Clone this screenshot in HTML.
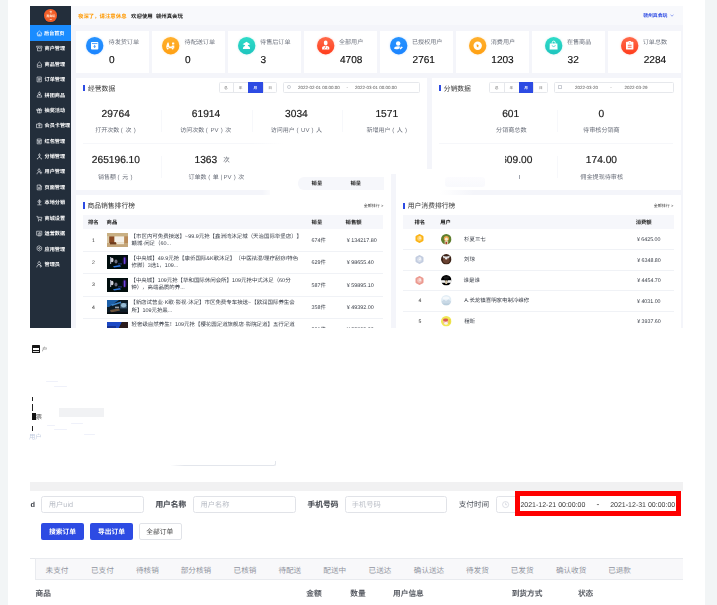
<!DOCTYPE html>
<html lang="zh-CN"><head><meta charset="utf-8"><title>订单管理</title>
<style>
html,body{margin:0;padding:0;}
body{width:717px;height:605px;overflow:hidden;background:#fff;position:relative;font-family:"Liberation Sans","Noto Sans CJK SC",sans-serif;text-rendering:geometricPrecision;}
.a{position:absolute;box-sizing:border-box;}
.t{white-space:pre;text-spacing-trim:space-all;}
i{font-style:normal}.p1{margin:0 2.7px 0 1.6px}.p2{margin-left:2.2px}.p3{margin-left:2.4px}.p4{margin:0 1.6px}
#dash{position:absolute;left:0;top:0;width:717px;height:327.9px;overflow:hidden;filter:blur(0.3px);}
#form{position:absolute;left:0;top:0;width:717px;height:605px;filter:blur(0.25px);}
svg{overflow:visible}
</style></head><body>

<div class="a" style="left:0.00px;top:0.00px;width:8.00px;height:605.00px;background:#f2f5f6;"></div>
<div class="a" style="left:705.00px;top:0.00px;width:12.00px;height:605.00px;background:#f2f5f6;"></div>
<div id="dash">
<div class="a" style="left:30.00px;top:6.30px;width:653.00px;height:321.60px;background:#f4f5fa;"></div>
<div class="a" style="left:71.00px;top:6.30px;width:612.00px;height:18.70px;background:#f8f9fc;"></div>
<div class="a" style="left:30.00px;top:6.30px;width:41.10px;height:321.60px;background:#232e3b;"></div>
<div class="a" style="left:44.3px;top:9.4px;width:12.7px;height:12.7px;border-radius:50%;background:radial-gradient(circle at 45% 45%,#f4672f,#ee5320);box-shadow:0 0 0 0.9px #152b44;"></div>
<span id="t1" class="a t" style="top:10.78px;font-size:2.6px;line-height:3.64px;color:#ffe9d8;font-weight:bold;left:-49.30px;width:200px;text-align:center;">✿</span>
<span id="t2" class="a t" style="top:14.30px;font-size:3.0px;line-height:4.2px;color:#ffe9d8;font-weight:bold;left:-49.30px;width:200px;text-align:center;">真会玩</span>
<span id="t3" class="a t" style="top:18.60px;font-size:2.0px;line-height:2.8px;color:#ffe9d8;font-weight:bold;left:-49.30px;width:200px;text-align:center;">▬</span>
<div class="a" style="left:30.00px;top:24.70px;width:41.10px;height:16.20px;background:#1a8cff;"></div>
<svg class="a" style="left:35.9px;top:29.70px" width="6.8" height="6.8" viewBox="0 0 12 12"><path d="M1.5 6.2 L6 1.8 L10.5 6.2 M2.6 5.4 V10.3 H9.4 V5.4 M5 10.3 V7.6 H7 V10.3" fill="none" stroke="#f3f5f8" stroke-width="1.05" stroke-linejoin="round" stroke-linecap="round"/></svg>
<span id="t4" class="a t" style="top:31.46px;font-size:5.1px;line-height:7.14px;color:#fff;font-weight:bold;left:44.09px;">后台首页</span>
<svg class="a" style="left:35.9px;top:45.10px" width="6.8" height="6.8" viewBox="0 0 12 12"><path d="M1.6 2.2 H10.4 V4.4 a1.45 1.45 0 0 1 -2.9 0 a1.45 1.45 0 0 1 -2.9 0 a1.45 1.45 0 0 1 -3 0 Z M2.6 6.4 V10.3 H9.4 V6.4" fill="none" stroke="#f3f5f8" stroke-width="1.05" stroke-linejoin="round" stroke-linecap="round"/></svg>
<span id="t5" class="a t" style="top:46.27px;font-size:5.1px;line-height:7.14px;color:#fff;font-weight:bold;left:44.60px;">商户管理</span>
<svg class="a" style="left:35.9px;top:60.50px" width="6.8" height="6.8" viewBox="0 0 12 12"><path d="M2.4 10.3 V5.2 L6 1.8 L9.6 5.2 V10.3 Z M4.6 7.8 H7.4" fill="none" stroke="#f3f5f8" stroke-width="1.05" stroke-linejoin="round" stroke-linecap="round"/></svg>
<span id="t6" class="a t" style="top:61.97px;font-size:5.1px;line-height:7.14px;color:#fff;font-weight:bold;left:44.60px;">商品管理</span>
<svg class="a" style="left:35.9px;top:75.90px" width="6.8" height="6.8" viewBox="0 0 12 12"><path d="M2.6 1.8 H9.4 V10.3 H2.6 Z M4.4 4.2 H7.6 M4.4 6.2 H7.6 M4.4 8.2 H6.2" fill="none" stroke="#f3f5f8" stroke-width="1.05" stroke-linejoin="round" stroke-linecap="round"/></svg>
<span id="t7" class="a t" style="top:76.78px;font-size:5.1px;line-height:7.14px;color:#fff;font-weight:bold;left:44.60px;">订单管理</span>
<svg class="a" style="left:35.9px;top:91.30px" width="6.8" height="6.8" viewBox="0 0 12 12"><path d="M6 2 a2 2 0 1 0 0.01 0 M1.8 10.2 a4.2 4.2 0 0 1 8.4 0 Z M6 6 V8" fill="none" stroke="#f3f5f8" stroke-width="1.05" stroke-linejoin="round" stroke-linecap="round"/></svg>
<span id="t8" class="a t" style="top:92.96px;font-size:5.1px;line-height:7.14px;color:#fff;font-weight:bold;left:44.60px;">拼团商品</span>
<svg class="a" style="left:35.9px;top:106.70px" width="6.8" height="6.8" viewBox="0 0 12 12"><path d="M1.8 4.2 H10.2 V6 H1.8 Z M2.8 6 V10.3 H9.2 V6 M6 4.2 V10.3 M6 4.2 C4 1, 2.6 3, 6 4.2 C8 1, 9.4 3, 6 4.2" fill="none" stroke="#f3f5f8" stroke-width="1.05" stroke-linejoin="round" stroke-linecap="round"/></svg>
<span id="t9" class="a t" style="top:108.33px;font-size:5.1px;line-height:7.14px;color:#fff;font-weight:bold;left:44.60px;">抽奖活动</span>
<svg class="a" style="left:35.9px;top:122.10px" width="6.8" height="6.8" viewBox="0 0 12 12"><path d="M1.6 3.6 H10.4 V10 H1.6 Z M4 3.6 L5 2 H7 L8 3.6 M6 5.6 a1.3 1.3 0 1 0 0.01 0" fill="none" stroke="#f3f5f8" stroke-width="1.05" stroke-linejoin="round" stroke-linecap="round"/></svg>
<span id="t10" class="a t" style="top:123.18px;font-size:5.1px;line-height:7.14px;color:#fff;font-weight:bold;left:44.60px;">会员卡管理</span>
<svg class="a" style="left:35.9px;top:137.50px" width="6.8" height="6.8" viewBox="0 0 12 12"><path d="M2.8 1.8 H9.2 V10.3 H2.8 Z M2.8 4.6 H9.2 M5 6.2 H7 V8.2 H5 Z" fill="none" stroke="#f3f5f8" stroke-width="1.05" stroke-linejoin="round" stroke-linecap="round"/></svg>
<span id="t11" class="a t" style="top:139.08px;font-size:5.1px;line-height:7.14px;color:#fff;font-weight:bold;left:44.60px;">红包管理</span>
<svg class="a" style="left:35.9px;top:152.90px" width="6.8" height="6.8" viewBox="0 0 12 12"><path d="M6 1.8 a1.7 1.7 0 1 0 0.01 0 M6 5.2 V7 M6 7 L2.6 10 M6 7 L9.4 10 M2.2 10.2 h0.8 M9 10.2 h0.8" fill="none" stroke="#f3f5f8" stroke-width="1.05" stroke-linejoin="round" stroke-linecap="round"/></svg>
<span id="t12" class="a t" style="top:153.85px;font-size:5.1px;line-height:7.14px;color:#fff;font-weight:bold;left:44.60px;">分销管理</span>
<svg class="a" style="left:35.9px;top:168.30px" width="6.8" height="6.8" viewBox="0 0 12 12"><path d="M5.4 1.8 a2.1 2.1 0 1 0 0.01 0 M1.8 10.3 a3.7 3.7 0 0 1 5.2 -3.6 M8.6 6.6 V10.3 M7 8.4 H10.2" fill="none" stroke="#f3f5f8" stroke-width="1.05" stroke-linejoin="round" stroke-linecap="round"/></svg>
<span id="t13" class="a t" style="top:169.07px;font-size:5.1px;line-height:7.14px;color:#fff;font-weight:bold;left:44.60px;">用户管理</span>
<svg class="a" style="left:35.9px;top:183.70px" width="6.8" height="6.8" viewBox="0 0 12 12"><path d="M2.8 1.8 H7.4 L9.4 3.8 V10.3 H2.8 Z M7.2 1.8 V4 H9.4 M4.4 6 H7.6 M4.4 8 H7.6" fill="none" stroke="#f3f5f8" stroke-width="1.05" stroke-linejoin="round" stroke-linecap="round"/></svg>
<span id="t14" class="a t" style="top:185.11px;font-size:5.1px;line-height:7.14px;color:#fff;font-weight:bold;left:44.60px;">页面管理</span>
<svg class="a" style="left:35.9px;top:199.10px" width="6.8" height="6.8" viewBox="0 0 12 12"><path d="M6 1.8 a2.6 2.6 0 1 0 0.01 0 M6 7 V9.2 M3 10.3 H9 M6 3.6 a0.8 0.8 0 1 0 0.01 0" fill="none" stroke="#f3f5f8" stroke-width="1.05" stroke-linejoin="round" stroke-linecap="round"/></svg>
<span id="t15" class="a t" style="top:200.31px;font-size:5.1px;line-height:7.14px;color:#fff;font-weight:bold;left:44.60px;">本地分销</span>
<svg class="a" style="left:35.9px;top:214.50px" width="6.8" height="6.8" viewBox="0 0 12 12"><path d="M1.4 2.4 H3 L4.2 7.8 H9.6 L10.4 4 H3.6 M4.8 9.8 a0.5 0.5 0 1 0 0.01 0 M8.8 9.8 a0.5 0.5 0 1 0 0.01 0" fill="none" stroke="#f3f5f8" stroke-width="1.05" stroke-linejoin="round" stroke-linecap="round"/></svg>
<span id="t16" class="a t" style="top:216.23px;font-size:5.1px;line-height:7.14px;color:#fff;font-weight:bold;left:44.60px;">商城设置</span>
<svg class="a" style="left:35.9px;top:229.90px" width="6.8" height="6.8" viewBox="0 0 12 12"><path d="M1.8 2.2 H10.2 V9.2 H1.8 Z M4 10.4 H8 M4.2 7.4 V5.6 M6 7.4 V4.2 M7.8 7.4 V5" fill="none" stroke="#f3f5f8" stroke-width="1.05" stroke-linejoin="round" stroke-linecap="round"/></svg>
<span id="t17" class="a t" style="top:230.78px;font-size:5.1px;line-height:7.14px;color:#fff;font-weight:bold;left:44.60px;">运营数据</span>
<svg class="a" style="left:35.9px;top:245.30px" width="6.8" height="6.8" viewBox="0 0 12 12"><path d="M6 1.6 L10 3.9 V8.3 L6 10.6 L2 8.3 V3.9 Z M6 4.6 a1.5 1.5 0 1 0 0.01 0" fill="none" stroke="#f3f5f8" stroke-width="1.05" stroke-linejoin="round" stroke-linecap="round"/></svg>
<span id="t18" class="a t" style="top:246.73px;font-size:5.1px;line-height:7.14px;color:#fff;font-weight:bold;left:44.60px;">应用管理</span>
<svg class="a" style="left:35.9px;top:260.70px" width="6.8" height="6.8" viewBox="0 0 12 12"><path d="M5.6 1.4 a2.5 2.5 0 1 0 0.01 0 M1.4 10.6 a4.2 4.2 0 0 1 6.6 -3.4 M8.4 8 a1.3 1.3 0 1 0 0.01 0" fill="none" stroke="#f3f5f8" stroke-width="1.05" stroke-linejoin="round" stroke-linecap="round"/></svg>
<span id="t19" class="a t" style="top:262.43px;font-size:5.1px;line-height:7.14px;color:#fff;font-weight:bold;left:44.60px;">管理员</span>
<span id="t20" class="a t" style="top:13.98px;font-size:5.4px;line-height:7.56px;color:#ff9900;font-weight:bold;left:78.00px;">夜深了，请注意休息</span>
<span id="t21" class="a t" style="top:13.98px;font-size:5.4px;line-height:7.56px;color:#222;font-weight:bold;left:131.10px;">欢迎使用</span>
<span id="t22" class="a t" style="top:13.98px;font-size:5.4px;line-height:7.56px;color:#222;font-weight:bold;left:155.89px;">赣州真会玩</span>
<span id="t23" class="a t" style="top:14.09px;font-size:4.85px;line-height:6.79px;color:#2d4be3;font-weight:bold;left:643.17px;">赣州真会玩</span>
<svg class="a" style="left:669.6px;top:13.6px" width="4" height="3" viewBox="0 0 4 3"><path d="M0.5 0.8 L2 2.2 L3.5 0.8" fill="none" stroke="#2d4be3" stroke-width="0.5"/></svg>
<div class="a" style="left:76.20px;top:30.90px;width:72.70px;height:41.80px;background:#fff;"></div>
<svg class="a" style="left:86.00px;top:37.2px;filter:drop-shadow(0 0.8px 1px #1b84ff40)" width="17.4" height="17.4" viewBox="0 0 17.4 17.4"><defs><linearGradient id="g0" x1="0" y1="0" x2="0" y2="1"><stop offset="0" stop-color="#2693ff"/><stop offset="1" stop-color="#1b84ff"/></linearGradient></defs><circle cx="8.7" cy="8.7" r="8.7" fill="url(#g0)"/><rect x="5" y="5" width="7.3" height="7.6" rx="0.8" fill="#fff"/><rect x="5.9" y="6.2" width="5.5" height="0.7" fill="#1b84ff"/><path d="M8.65 7.9 V10.4 M7.7 9.4 L8.65 10.5 L9.6 9.4" stroke="#1b84ff" stroke-width="0.8" fill="none"/></svg>
<span id="t24" class="a t" style="top:39.45px;font-size:6.1px;line-height:8.54px;color:#737883;left:108.60px;">待发货订单</span>
<span id="t25" class="a t" style="top:54.31px;font-size:10.1px;line-height:14.14px;color:#111;left:108.90px;-webkit-text-stroke:0.15px #111;">0</span>
<div class="a" style="left:152.20px;top:30.90px;width:72.70px;height:41.80px;background:#fff;"></div>
<svg class="a" style="left:162.00px;top:37.2px;filter:drop-shadow(0 0.8px 1px #ffa01240)" width="17.4" height="17.4" viewBox="0 0 17.4 17.4"><defs><linearGradient id="g1" x1="0" y1="0" x2="0" y2="1"><stop offset="0" stop-color="#ffb02e"/><stop offset="1" stop-color="#ffa012"/></linearGradient></defs><circle cx="8.7" cy="8.7" r="8.7" fill="url(#g1)"/><path d="M5.6 5.4 L6.6 5.4 L7.4 9.6 L9.6 9.6 L10 8.4 L12.3 8.4 L12.3 11.2 L11.8 11.2 A1.3 1.3 0 0 0 9.4 11.2 L7 11.2 A1.3 1.3 0 0 0 4.4 11.2 L4 11.2 L4.6 8 Z" fill="#fff"/><circle cx="5.7" cy="11.4" r="1.0" fill="#fff"/><circle cx="10.6" cy="11.4" r="1.0" fill="#fff"/><rect x="10" y="5.6" width="2.3" height="1.8" rx="0.3" fill="#fff"/></svg>
<span id="t26" class="a t" style="top:39.45px;font-size:6.1px;line-height:8.54px;color:#737883;left:184.60px;">待配送订单</span>
<span id="t27" class="a t" style="top:54.31px;font-size:10.1px;line-height:14.14px;color:#111;left:184.90px;-webkit-text-stroke:0.15px #111;">0</span>
<div class="a" style="left:228.20px;top:30.90px;width:72.70px;height:41.80px;background:#fff;"></div>
<svg class="a" style="left:238.00px;top:37.2px;filter:drop-shadow(0 0.8px 1px #1ec4be40)" width="17.4" height="17.4" viewBox="0 0 17.4 17.4"><defs><linearGradient id="g2" x1="0" y1="0" x2="0" y2="1"><stop offset="0" stop-color="#2fdcc8"/><stop offset="1" stop-color="#1ec4be"/></linearGradient></defs><circle cx="8.7" cy="8.7" r="8.7" fill="url(#g2)"/><path d="M4.6 7.2 L8.5 4.7 L12.3 7.2 L10.2 7.9 A1.9 1.9 0 0 1 6.7 7.9 Z" fill="#fff"/><circle cx="8.5" cy="7.6" r="1.7" fill="#fff"/><path d="M4.9 12 A3.6 3.2 0 0 1 12.1 12 Z" fill="#fff"/></svg>
<span id="t28" class="a t" style="top:39.45px;font-size:6.1px;line-height:8.54px;color:#737883;left:260.09px;">待售后订单</span>
<span id="t29" class="a t" style="top:54.31px;font-size:10.1px;line-height:14.14px;color:#111;left:260.42px;-webkit-text-stroke:0.15px #111;">3</span>
<div class="a" style="left:304.20px;top:30.90px;width:72.70px;height:41.80px;background:#fff;"></div>
<svg class="a" style="left:317.05px;top:37.2px;filter:drop-shadow(0 0.8px 1px #ff3d1c40)" width="17.4" height="17.4" viewBox="0 0 17.4 17.4"><defs><linearGradient id="g3" x1="0" y1="0" x2="0" y2="1"><stop offset="0" stop-color="#ff6a4a"/><stop offset="1" stop-color="#ff3d1c"/></linearGradient></defs><circle cx="8.7" cy="8.7" r="8.7" fill="url(#g3)"/><ellipse cx="8.7" cy="5.9" rx="1.9" ry="2.3" fill="#fff"/><path d="M5.1 12.6 V10.6 Q5.1 9.4 6.6 9.2 L8.7 8.6 L10.8 9.2 Q12.3 9.4 12.3 10.6 V12.6 Z" fill="#fff"/><rect x="8.45" y="8.4" width="0.5" height="2.6" fill="#ff3d1c"/><rect x="7" y="10.6" width="0.5" height="1.2" fill="#ff3d1c"/><rect x="10" y="10.6" width="0.5" height="1.2" fill="#ff3d1c"/></svg>
<span id="t30" class="a t" style="top:39.45px;font-size:6.1px;line-height:8.54px;color:#737883;left:338.93px;">全部用户</span>
<span id="t31" class="a t" style="top:54.31px;font-size:10.1px;line-height:14.14px;color:#111;left:339.95px;-webkit-text-stroke:0.15px #111;">4708</span>
<div class="a" style="left:380.20px;top:30.90px;width:72.70px;height:41.80px;background:#fff;"></div>
<svg class="a" style="left:390.00px;top:37.2px;filter:drop-shadow(0 0.8px 1px #1b84ff40)" width="17.4" height="17.4" viewBox="0 0 17.4 17.4"><defs><linearGradient id="g4" x1="0" y1="0" x2="0" y2="1"><stop offset="0" stop-color="#2693ff"/><stop offset="1" stop-color="#1b84ff"/></linearGradient></defs><circle cx="8.7" cy="8.7" r="8.7" fill="url(#g4)"/><circle cx="8.2" cy="6.5" r="2.2" fill="#fff"/><path d="M4 11.6 Q4.4 9.2 8.2 9.2 Q9.6 9.2 10.4 9.7 L8.6 12 Q5 12.6 4 11.6 Z" fill="#fff"/><path d="M9.4 11.6 L11.6 9.4 L12.9 10.2 L10.6 12.6 Z" fill="#fff"/></svg>
<span id="t32" class="a t" style="top:39.45px;font-size:6.1px;line-height:8.54px;color:#737883;left:411.98px;">已授权用户</span>
<span id="t33" class="a t" style="top:54.31px;font-size:10.1px;line-height:14.14px;color:#111;left:412.52px;-webkit-text-stroke:0.15px #111;">2761</span>
<div class="a" style="left:456.20px;top:30.90px;width:72.70px;height:41.80px;background:#fff;"></div>
<svg class="a" style="left:469.05px;top:37.2px;filter:drop-shadow(0 0.8px 1px #ffa01240)" width="17.4" height="17.4" viewBox="0 0 17.4 17.4"><defs><linearGradient id="g5" x1="0" y1="0" x2="0" y2="1"><stop offset="0" stop-color="#ffb02e"/><stop offset="1" stop-color="#ffa012"/></linearGradient></defs><circle cx="8.7" cy="8.7" r="8.7" fill="url(#g5)"/><circle cx="8.7" cy="8.7" r="4.2" fill="#fff"/><path d="M7.6 7.2 L9.6 8 L9.2 10.4 L7.8 9.4 Z" fill="#ffa012"/></svg>
<span id="t34" class="a t" style="top:39.45px;font-size:6.1px;line-height:8.54px;color:#737883;left:490.77px;">消费用户</span>
<span id="t35" class="a t" style="top:54.31px;font-size:10.1px;line-height:14.14px;color:#111;left:491.27px;-webkit-text-stroke:0.15px #111;">1203</span>
<div class="a" style="left:532.20px;top:30.90px;width:72.70px;height:41.80px;background:#fff;"></div>
<svg class="a" style="left:545.05px;top:37.2px;filter:drop-shadow(0 0.8px 1px #1ec4be40)" width="17.4" height="17.4" viewBox="0 0 17.4 17.4"><defs><linearGradient id="g6" x1="0" y1="0" x2="0" y2="1"><stop offset="0" stop-color="#2fdcc8"/><stop offset="1" stop-color="#1ec4be"/></linearGradient></defs><circle cx="8.7" cy="8.7" r="8.7" fill="url(#g6)"/><path d="M4.8 6.4 H12.4 L12.6 12.6 H4.6 Z" fill="#fff"/><path d="M7.2 6.8 V5.6 A1.5 1.5 0 0 1 10.2 5.6 V6.8" stroke="#fff" stroke-width="0.9" fill="none"/><path d="M6.8 8.6 Q8.7 10.6 10.6 8.6" stroke="#1ec4be" stroke-width="0.7" fill="none"/></svg>
<span id="t36" class="a t" style="top:39.45px;font-size:6.1px;line-height:8.54px;color:#737883;left:566.90px;">在售商品</span>
<span id="t37" class="a t" style="top:54.31px;font-size:10.1px;line-height:14.14px;color:#111;left:567.52px;-webkit-text-stroke:0.15px #111;">32</span>
<div class="a" style="left:608.20px;top:30.90px;width:72.70px;height:41.80px;background:#fff;"></div>
<svg class="a" style="left:621.05px;top:37.2px;filter:drop-shadow(0 0.8px 1px #ff3d1c40)" width="17.4" height="17.4" viewBox="0 0 17.4 17.4"><defs><linearGradient id="g7" x1="0" y1="0" x2="0" y2="1"><stop offset="0" stop-color="#ff6a4a"/><stop offset="1" stop-color="#ff3d1c"/></linearGradient></defs><circle cx="8.7" cy="8.7" r="8.7" fill="url(#g7)"/><rect x="5" y="4.8" width="7.4" height="7.8" rx="0.7" fill="#fff"/><rect x="7.4" y="4.1" width="2.6" height="1.5" rx="0.4" fill="#fff"/><rect x="6.8" y="7.8" width="3.8" height="0.8" fill="#ff3d1c"/><rect x="6.8" y="9.8" width="3.8" height="0.8" fill="#ff3d1c"/><rect x="8.2" y="5.6" width="1" height="0.6" fill="#ff3d1c"/></svg>
<span id="t38" class="a t" style="top:39.45px;font-size:6.1px;line-height:8.54px;color:#737883;left:642.72px;">订单总数</span>
<span id="t39" class="a t" style="top:54.31px;font-size:10.1px;line-height:14.14px;color:#111;left:643.66px;-webkit-text-stroke:0.15px #111;">2284</span>
<div class="a" style="left:76.20px;top:78.10px;width:350.80px;height:111.80px;background:#fff;"></div>
<div class="a" style="left:83.00px;top:85.00px;width:1.50px;height:6.20px;background:#2d4be3;"></div>
<span id="t40" class="a t" style="top:85.05px;font-size:6.8px;line-height:9.52px;color:#333;left:88.00px;">经营数据</span>
<div class="a" style="left:218.50px;top:81.80px;width:58.88px;height:10.8px;border:1px solid #e6e8ec;border-radius:1.5px;background:#fff;"></div>
<span id="t41" class="a t" style="top:86.01px;font-size:3.7px;line-height:5.18px;color:#666;left:125.86px;width:200px;text-align:center;">总</span>
<div class="a" style="left:233.22px;top:81.80px;width:0.60px;height:10.80px;background:#e6e8ec;"></div>
<span id="t42" class="a t" style="top:86.01px;font-size:3.7px;line-height:5.18px;color:#666;left:140.58px;width:200px;text-align:center;">年</span>
<div class="a" style="left:247.94px;top:81.80px;width:14.72px;height:10.80px;background:#2d4be3;"></div>
<span id="t43" class="a t" style="top:85.53px;font-size:3.7px;line-height:5.18px;color:#fff;font-weight:bold;left:155.30px;width:200px;text-align:center;">月</span>
<div class="a" style="left:262.66px;top:81.80px;width:0.60px;height:10.80px;background:#e6e8ec;"></div>
<span id="t44" class="a t" style="top:86.01px;font-size:3.7px;line-height:5.18px;color:#666;left:170.02px;width:200px;text-align:center;">日</span>
<div class="a" style="left:283.00px;top:81.80px;width:136.70px;height:10.8px;border:1px solid #e6e8ec;border-radius:1.5px;background:#fff;"></div>
<div class="a" style="left:287.00px;top:85.30px;width:3.8px;height:3.8px;border:0.6px solid #c9ccd3;border-radius:50%;"></div>
<span id="t45" class="a t" style="top:84.89px;font-size:4.5px;line-height:6.3px;color:#555;left:298.00px;">2022-02-01 00:00:00</span>
<span id="t46" class="a t" style="top:85.35px;font-size:4.5px;line-height:6.3px;color:#555;left:247.30px;width:200px;text-align:center;">-</span>
<span id="t47" class="a t" style="top:84.89px;font-size:4.5px;line-height:6.3px;color:#555;left:355.00px;">2022-03-01 00:00:00</span>
<span id="t48" class="a t" style="top:107.76px;font-size:10.2px;line-height:14.28px;color:#1c1c1c;left:15.70px;width:200px;text-align:center;-webkit-text-stroke:0.2px #1c1c1c;">29764</span>
<span id="t49" class="a t" style="top:127.32px;font-size:6.0px;line-height:8.4px;color:#6c717c;left:15.44px;width:200px;text-align:center;">打开次数<i class="p1">(</i>次<i class="p2">)</i></span>
<span id="t50" class="a t" style="top:107.76px;font-size:10.2px;line-height:14.28px;color:#1c1c1c;left:106.00px;width:200px;text-align:center;-webkit-text-stroke:0.2px #1c1c1c;">61914</span>
<span id="t51" class="a t" style="top:127.32px;font-size:6.0px;line-height:8.4px;color:#6c717c;left:105.71px;width:200px;text-align:center;">访问次数<i class="p1">(</i>PV<i class="p2">)</i><i class="p3">次</i></span>
<span id="t52" class="a t" style="top:107.76px;font-size:10.2px;line-height:14.28px;color:#1c1c1c;left:196.40px;width:200px;text-align:center;-webkit-text-stroke:0.2px #1c1c1c;">3034</span>
<span id="t53" class="a t" style="top:127.32px;font-size:6.0px;line-height:8.4px;color:#6c717c;left:196.40px;width:200px;text-align:center;">访问用户<i class="p1">(</i>UV<i class="p2">)</i><i class="p3">人</i></span>
<span id="t54" class="a t" style="top:107.76px;font-size:10.2px;line-height:14.28px;color:#1c1c1c;left:286.80px;width:200px;text-align:center;-webkit-text-stroke:0.2px #1c1c1c;">1571</span>
<span id="t55" class="a t" style="top:127.32px;font-size:6.0px;line-height:8.4px;color:#6c717c;left:286.80px;width:200px;text-align:center;">新增用户<i class="p1">(</i>人<i class="p2">)</i></span>
<div class="a" style="left:161.20px;top:110.00px;width:0.60px;height:22.00px;background:#f7f8fb;"></div>
<div class="a" style="left:251.60px;top:110.00px;width:0.60px;height:22.00px;background:#f7f8fb;"></div>
<div class="a" style="left:342.00px;top:110.00px;width:0.60px;height:22.00px;background:#f7f8fb;"></div>
<div class="a" style="left:83.00px;top:143.00px;width:200.00px;height:0.60px;background:linear-gradient(90deg,#f6f7fa 85%,#fff);"></div>
<span id="t56" class="a t" style="top:154.16px;font-size:10.2px;line-height:14.28px;color:#1c1c1c;left:15.90px;width:200px;text-align:center;-webkit-text-stroke:0.2px #1c1c1c;">265196.10</span>
<span id="t57" class="a t" style="top:173.52px;font-size:6.0px;line-height:8.4px;color:#6c717c;left:15.20px;width:200px;text-align:center;">销售额<i class="p1">(</i>元<i class="p2">)</i></span>
<div class="a" style="left:161.20px;top:156.00px;width:0.60px;height:22.00px;background:#f7f8fb;"></div>
<span id="t58" class="a t" style="top:154.16px;font-size:10.2px;line-height:14.28px;color:#1c1c1c;left:194.48px;-webkit-text-stroke:0.2px #1c1c1c;">1363</span>
<span id="t59" class="a t" style="top:156.08px;font-size:6.5px;line-height:9.1px;color:#5f646e;left:223.24px;">次</span>
<span id="t60" class="a t" style="top:174.34px;font-size:6.0px;line-height:8.4px;color:#6c717c;left:116.40px;width:200px;text-align:center;">订单数<i class="p1">(</i>单<i class="p4">|</i>PV<i class="p2">)</i><i class="p3">次</i></span>
<div class="a" style="left:432.30px;top:78.10px;width:248.30px;height:111.80px;background:#fff;"></div>
<div class="a" style="left:439.40px;top:85.00px;width:1.50px;height:6.20px;background:#2d4be3;"></div>
<span id="t61" class="a t" style="top:85.05px;font-size:6.8px;line-height:9.52px;color:#333;left:443.68px;">分销数据</span>
<div class="a" style="left:489.20px;top:81.80px;width:58.88px;height:10.8px;border:1px solid #e6e8ec;border-radius:1.5px;background:#fff;"></div>
<span id="t62" class="a t" style="top:86.01px;font-size:3.7px;line-height:5.18px;color:#666;left:396.56px;width:200px;text-align:center;">总</span>
<div class="a" style="left:503.92px;top:81.80px;width:0.60px;height:10.80px;background:#e6e8ec;"></div>
<span id="t63" class="a t" style="top:86.01px;font-size:3.7px;line-height:5.18px;color:#666;left:411.28px;width:200px;text-align:center;">年</span>
<div class="a" style="left:518.64px;top:81.80px;width:14.72px;height:10.80px;background:#2d4be3;"></div>
<span id="t64" class="a t" style="top:85.53px;font-size:3.7px;line-height:5.18px;color:#fff;font-weight:bold;left:426.00px;width:200px;text-align:center;">月</span>
<div class="a" style="left:533.36px;top:81.80px;width:0.60px;height:10.80px;background:#e6e8ec;"></div>
<span id="t65" class="a t" style="top:86.01px;font-size:3.7px;line-height:5.18px;color:#666;left:440.72px;width:200px;text-align:center;">日</span>
<div class="a" style="left:553.80px;top:81.80px;width:120.10px;height:10.8px;border:1px solid #e6e8ec;border-radius:1.5px;background:#fff;"></div>
<div class="a" style="left:557.80px;top:85.40px;width:3.8px;height:3.6px;border:0.6px solid #c9ccd3;border-radius:0.6px;"></div>
<span id="t66" class="a t" style="top:84.89px;font-size:4.5px;line-height:6.3px;color:#555;left:575.00px;">2022-03-20</span>
<span id="t67" class="a t" style="top:85.35px;font-size:4.5px;line-height:6.3px;color:#555;left:511.00px;width:200px;text-align:center;">-</span>
<span id="t68" class="a t" style="top:84.89px;font-size:4.5px;line-height:6.3px;color:#555;left:624.40px;">2022-03-29</span>
<span id="t69" class="a t" style="top:107.76px;font-size:10.2px;line-height:14.28px;color:#1c1c1c;left:410.70px;width:200px;text-align:center;-webkit-text-stroke:0.2px #1c1c1c;">601</span>
<span id="t70" class="a t" style="top:127.46px;font-size:6.1px;line-height:8.54px;color:#6c717c;left:411.30px;width:200px;text-align:center;">分销商总数</span>
<span id="t71" class="a t" style="top:107.76px;font-size:10.2px;line-height:14.28px;color:#1c1c1c;left:501.40px;width:200px;text-align:center;-webkit-text-stroke:0.2px #1c1c1c;">0</span>
<span id="t72" class="a t" style="top:127.46px;font-size:6.1px;line-height:8.54px;color:#6c717c;left:501.40px;width:200px;text-align:center;">待审核分销商</span>
<div class="a" style="left:556.60px;top:110.00px;width:0.60px;height:22.00px;background:#f7f8fb;"></div>
<div class="a" style="left:439.00px;top:143.00px;width:234.00px;height:0.60px;background:#f6f7fa;"></div>
<div class="a" style="left:270.00px;top:143.80px;width:411.00px;height:51.50px;background:#fff;"></div>
<div class="a" style="left:262.00px;top:189.90px;width:12.00px;height:5.40px;background:linear-gradient(90deg,rgba(255,255,255,0),#fff);"></div>
<div class="a" style="left:427.00px;top:143.00px;width:5.30px;height:26.00px;background:#f4f5fa;"></div>
<div class="a" style="left:440.00px;top:189.90px;width:241.00px;height:5.40px;background:linear-gradient(90deg,rgba(244,245,250,0),#f4f5fa 14%);"></div>
<div class="a" style="left:445.00px;top:177.00px;width:40.00px;height:10.00px;background:linear-gradient(180deg,#fbfbfe,#f7f8fc);border-radius:3px;opacity:.8;"></div>
<div class="a" style="left:391.30px;top:173.50px;width:4.70px;height:154.00px;background:#f4f5fa;"></div>
<div class="a" style="left:298.00px;top:176.50px;width:85.50px;height:13.60px;background:#f6f7fb;border-radius:6px 0 0 6px;"></div>
<span id="t73" class="a t" style="top:181.09px;font-size:5.3px;line-height:7.42px;color:#222;font-weight:bold;left:311.60px;">销量</span>
<span id="t74" class="a t" style="top:181.09px;font-size:5.3px;line-height:7.42px;color:#222;font-weight:bold;left:350.40px;">销量</span>
<span id="t75" class="a t" style="top:154.16px;font-size:10.2px;line-height:14.28px;color:#1c1c1c;left:332.35px;width:200px;text-align:right;-webkit-text-stroke:0.2px #1c1c1c;">609.00</span>
<div class="a" style="left:498.00px;top:152.00px;width:6.60px;height:14.00px;background:#fff;"></div>
<span id="t76" class="a t" style="top:154.16px;font-size:10.2px;line-height:14.28px;color:#1c1c1c;left:501.43px;width:200px;text-align:center;-webkit-text-stroke:0.2px #1c1c1c;">174.00</span>
<span id="t77" class="a t" style="top:174.31px;font-size:6.1px;line-height:8.54px;color:#6c717c;left:501.70px;width:200px;text-align:center;">佣金提现待审核</span>
<div class="a" style="left:519.00px;top:175.20px;width:1.00px;height:3.60px;background:#a0a5ae;"></div>
<div class="a" style="left:556.60px;top:156.00px;width:0.60px;height:22.00px;background:#f7f8fb;"></div>
<div class="a" style="left:680.80px;top:143.00px;width:2.20px;height:185.00px;background:#f4f5fa;"></div>
<div class="a" style="left:76.20px;top:195.30px;width:315.10px;height:133.00px;background:#fff;"></div>
<div class="a" style="left:83.00px;top:202.40px;width:1.50px;height:6.20px;background:#2d4be3;"></div>
<span id="t78" class="a t" style="top:201.83px;font-size:6.8px;line-height:9.52px;color:#333;left:87.45px;">商品销售排行榜</span>
<span id="t79" class="a t" style="top:202.60px;font-size:4.0px;line-height:5.6px;color:#333;left:363.80px;">全部排行 &gt;</span>
<div class="a" style="left:83.00px;top:215.40px;width:300.30px;height:13.50px;background:#f6f7fb;"></div>
<span id="t80" class="a t" style="top:220.05px;font-size:5.3px;line-height:7.42px;color:#222;font-weight:bold;left:88.00px;">排名</span>
<span id="t81" class="a t" style="top:220.05px;font-size:5.3px;line-height:7.42px;color:#222;font-weight:bold;left:106.61px;">商品</span>
<span id="t82" class="a t" style="top:220.05px;font-size:5.3px;line-height:7.42px;color:#222;font-weight:bold;left:311.60px;">销量</span>
<span id="t83" class="a t" style="top:220.05px;font-size:5.3px;line-height:7.42px;color:#222;font-weight:bold;left:345.60px;">销售额</span>
<span id="t84" class="a t" style="top:238.34px;font-size:5.1px;line-height:7.14px;color:#333;left:-6.70px;width:200px;text-align:center;">1</span>
<svg class="a" style="left:107.00px;top:233.05px" width="21.0" height="14.1" viewBox="0 0 21 14.1"><defs><filter id="pf0" x="-5%" y="-5%" width="110%" height="110%"><feGaussianBlur stdDeviation="0.45"/></filter><clipPath id="pc0"><rect width="21" height="14.1"/></clipPath></defs><g clip-path="url(#pc0)"><g filter="url(#pf0)"><rect width="21" height="14.1" fill="#d9c9a6"/><rect x="0" y="0" width="21" height="3.2" fill="#c9b083"/><rect x="2.2" y="3.4" width="5.2" height="6.6" fill="#8a4a22"/><rect x="7.6" y="3.6" width="9.5" height="5.8" fill="#f4f0e8"/><rect x="17.2" y="3.2" width="3.8" height="7" fill="#b98a58"/><rect x="0" y="10" width="21" height="4.1" fill="#c4a67a"/><rect x="3" y="9.2" width="6" height="2.2" fill="#6e3a1c"/><rect x="10" y="9.6" width="7" height="1.6" fill="#efe6d6"/></g></g></svg>
<span id="t85" class="a t" style="top:234.03px;font-size:5.45px;line-height:7.63px;color:#363b45;left:130.58px;">【市区内可免费接送】~99.9元抢【鑫洲湾沐足城（天治国际华堡店）】</span>
<span id="t86" class="a t" style="top:240.72px;font-size:5.45px;line-height:7.63px;color:#363b45;left:131.50px;">赣城·闲足（60...</span>
<span id="t87" class="a t" style="top:238.37px;font-size:5.35px;line-height:7.49px;color:#363b45;left:311.60px;">674件</span>
<span id="t88" class="a t" style="top:238.32px;font-size:5.4px;line-height:7.56px;color:#363b45;left:346.80px;">¥ 134217.80</span>
<div class="a" style="left:83.00px;top:251.10px;width:300.30px;height:0.60px;background:#f0f2f6;"></div>
<span id="t89" class="a t" style="top:260.07px;font-size:5.1px;line-height:7.14px;color:#333;left:-6.70px;width:200px;text-align:center;">2</span>
<svg class="a" style="left:107.00px;top:255.35px" width="21.0" height="14.1" viewBox="0 0 21 14.1"><defs><filter id="pf1" x="-5%" y="-5%" width="110%" height="110%"><feGaussianBlur stdDeviation="0.45"/></filter><clipPath id="pc1"><rect width="21" height="14.1"/></clipPath></defs><g clip-path="url(#pc1)"><g filter="url(#pf1)"><rect width="21" height="14.1" fill="#06070c"/><ellipse cx="5.0" cy="5.0" rx="1.5" ry="2.3" fill="#d4d6de"/><rect x="3" y="2" width="1.2" height="7" fill="#9aa0b0"/><ellipse cx="9" cy="6.5" rx="1.5" ry="2" fill="#6a7080"/><rect x="16.9" y="2.4" width="1.4" height="6.6" rx="0.7" fill="#7a4cf5"/><ellipse cx="17.6" cy="5.6" rx="2.0" ry="4.0" fill="#5a35c0" opacity=".35"/><path d="M6 11.2 L13 10 L14 11.4 L7 12.6 Z" fill="#2d7be0"/><rect x="11" y="8.4" width="4" height="1" fill="#27408a"/></g></g></svg>
<span id="t90" class="a t" style="top:255.89px;font-size:5.45px;line-height:7.63px;color:#363b45;left:130.45px;">【中央城】49.9元抢【康侨国际&amp;K歌沐足】（中医祛湿/理疗刮痧/特色</span>
<span id="t91" class="a t" style="top:263.19px;font-size:5.45px;line-height:7.63px;color:#363b45;left:131.50px;">修脚）3选1，109...</span>
<span id="t92" class="a t" style="top:259.97px;font-size:5.35px;line-height:7.49px;color:#363b45;left:311.60px;">629件</span>
<span id="t93" class="a t" style="top:259.92px;font-size:5.4px;line-height:7.56px;color:#363b45;left:346.80px;">¥ 98655.40</span>
<div class="a" style="left:83.00px;top:273.40px;width:300.30px;height:0.60px;background:#f0f2f6;"></div>
<span id="t94" class="a t" style="top:282.13px;font-size:5.1px;line-height:7.14px;color:#333;left:-6.70px;width:200px;text-align:center;">3</span>
<svg class="a" style="left:107.00px;top:277.65px" width="21.0" height="14.1" viewBox="0 0 21 14.1"><defs><filter id="pf2" x="-5%" y="-5%" width="110%" height="110%"><feGaussianBlur stdDeviation="0.45"/></filter><clipPath id="pc2"><rect width="21" height="14.1"/></clipPath></defs><g clip-path="url(#pc2)"><g filter="url(#pf2)"><rect width="21" height="14.1" fill="#06070c"/><ellipse cx="5.0" cy="5.0" rx="1.5" ry="2.3" fill="#d4d6de"/><rect x="3" y="2" width="1.2" height="7" fill="#9aa0b0"/><ellipse cx="9" cy="6.5" rx="1.5" ry="2" fill="#6a7080"/><rect x="16.9" y="2.4" width="1.4" height="6.6" rx="0.7" fill="#7a4cf5"/><ellipse cx="17.6" cy="5.6" rx="2.0" ry="4.0" fill="#5a35c0" opacity=".35"/><path d="M6 11.2 L13 10 L14 11.4 L7 12.6 Z" fill="#2d7be0"/><rect x="11" y="8.4" width="4" height="1" fill="#27408a"/></g></g></svg>
<span id="t95" class="a t" style="top:278.45px;font-size:5.45px;line-height:7.63px;color:#363b45;left:130.44px;">【中央城】109元抢【华和国际休闲会所】109元抢中式沐足（60分</span>
<span id="t96" class="a t" style="top:284.85px;font-size:5.45px;line-height:7.63px;color:#363b45;left:131.24px;">钟），高端品质的养...</span>
<span id="t97" class="a t" style="top:282.56px;font-size:5.35px;line-height:7.49px;color:#363b45;left:311.60px;">587件</span>
<span id="t98" class="a t" style="top:282.52px;font-size:5.4px;line-height:7.56px;color:#363b45;left:346.80px;">¥ 59895.10</span>
<div class="a" style="left:83.00px;top:295.70px;width:300.30px;height:0.60px;background:#f0f2f6;"></div>
<span id="t99" class="a t" style="top:305.07px;font-size:5.1px;line-height:7.14px;color:#333;left:-6.70px;width:200px;text-align:center;">4</span>
<svg class="a" style="left:107.00px;top:299.95px" width="21.0" height="14.1" viewBox="0 0 21 14.1"><defs><filter id="pf3" x="-5%" y="-5%" width="110%" height="110%"><feGaussianBlur stdDeviation="0.45"/></filter><clipPath id="pc3"><rect width="21" height="14.1"/></clipPath></defs><g clip-path="url(#pc3)"><g filter="url(#pf3)"><rect width="21" height="14.1" fill="#0c1a28"/><path d="M0 0 H12 L2 7 H0 Z" fill="#1d5fa8"/><path d="M4 4.5 L14 1.5 L14 3 L5 6 Z" fill="#3b86cc"/><ellipse cx="16.6" cy="5.2" rx="2.6" ry="2.2" fill="#bcd6e8"/><rect x="13.2" y="3" width="6.6" height="5.4" fill="#6f9fc0" opacity=".5"/><path d="M3 10 L12 8.6 L13 10.4 L4 12.4 Z" fill="#6b5138"/><rect x="0" y="12.4" width="21" height="1.7" fill="#05090f"/><rect x="8" y="6.6" width="4" height="1.6" fill="#d0dce6" opacity=".7"/></g></g></svg>
<span id="t100" class="a t" style="top:300.08px;font-size:5.45px;line-height:7.63px;color:#363b45;left:130.22px;">【新店试营业·K歌·影视·沐足】市区免费专车接送~【欧润国际养生会</span>
<span id="t101" class="a t" style="top:308.13px;font-size:5.45px;line-height:7.63px;color:#363b45;left:131.50px;">所】109元抢黑...</span>
<span id="t102" class="a t" style="top:305.16px;font-size:5.35px;line-height:7.49px;color:#363b45;left:311.60px;">358件</span>
<span id="t103" class="a t" style="top:305.03px;font-size:5.4px;line-height:7.56px;color:#363b45;left:346.80px;">¥ 49392.00</span>
<div class="a" style="left:83.00px;top:318.00px;width:300.30px;height:0.60px;background:#f0f2f6;"></div>
<span id="t104" class="a t" style="top:329.28px;font-size:5.1px;line-height:7.14px;color:#333;left:-6.70px;width:200px;text-align:center;">5</span>
<svg class="a" style="left:107.00px;top:322.25px" width="21.0" height="14.1" viewBox="0 0 21 14.1"><defs><filter id="pf4" x="-5%" y="-5%" width="110%" height="110%"><feGaussianBlur stdDeviation="0.45"/></filter><clipPath id="pc4"><rect width="21" height="14.1"/></clipPath></defs><g clip-path="url(#pc4)"><g filter="url(#pf4)"><rect width="21" height="14.1" fill="#10131f"/><path d="M0 0 H15 L12 6 H0 Z" fill="#1c49c4"/><path d="M15 0 H21 V6 H12 Z" fill="#2a1d1a"/><rect x="0" y="4" width="9" height="3" fill="#123391"/></g></g></svg>
<span id="t105" class="a t" style="top:322.24px;font-size:5.45px;line-height:7.63px;color:#363b45;left:131.50px;">轻奢级自然养生！109元抢【樱花园足道旗舰店·影院足道】五行足道</span>
<span id="t106" class="a t" style="top:326.81px;font-size:5.35px;line-height:7.49px;color:#363b45;left:311.60px;">301件</span>
<span id="t107" class="a t" style="top:326.77px;font-size:5.4px;line-height:7.56px;color:#363b45;left:346.80px;">¥ 32809.00</span>
<div class="a" style="left:396.00px;top:195.30px;width:285.00px;height:133.00px;background:#fff;"></div>
<div class="a" style="left:403.20px;top:202.60px;width:1.50px;height:6.20px;background:#2d4be3;"></div>
<span id="t108" class="a t" style="top:202.13px;font-size:6.8px;line-height:9.52px;color:#333;left:407.75px;">用户消费排行榜</span>
<span id="t109" class="a t" style="top:202.80px;font-size:4.0px;line-height:5.6px;color:#333;left:653.79px;">全部排行 &gt;</span>
<div class="a" style="left:403.20px;top:215.20px;width:270.80px;height:13.70px;background:#f6f7fb;"></div>
<span id="t110" class="a t" style="top:220.05px;font-size:5.3px;line-height:7.42px;color:#222;font-weight:bold;left:414.40px;">排名</span>
<span id="t111" class="a t" style="top:220.05px;font-size:5.3px;line-height:7.42px;color:#222;font-weight:bold;left:440.15px;">用户</span>
<span id="t112" class="a t" style="top:220.05px;font-size:5.3px;line-height:7.42px;color:#222;font-weight:bold;left:635.77px;">消费额</span>
<svg class="a" style="left:415.40px;top:234.40px" width="9" height="9" viewBox="0 0 90 90"><path d="M45 12 L74 28 L74 62 L45 78 L16 62 L16 28 Z" fill="#fbb417" stroke="#fbb417" stroke-width="22" stroke-linejoin="round"/><circle cx="45" cy="45" r="24" fill="#fff" opacity=".4"/></svg>
<span id="t113" class="a t" style="top:236.38px;font-size:3.6px;line-height:5.04px;color:#fff;font-weight:bold;left:319.90px;width:200px;text-align:center;">1</span>
<svg class="a" style="left:440.55px;top:233.65px" width="10.5" height="10.5" viewBox="0 0 10.5 10.5"><defs><filter id="af0" x="-5%" y="-5%" width="110%" height="110%"><feGaussianBlur stdDeviation="0.4"/></filter><clipPath id="ac0"><circle cx="5.25" cy="5.25" r="5.25"/></clipPath></defs><g clip-path="url(#ac0)"><g filter="url(#af0)"><rect width="10.5" height="10.5" fill="#5f7f2e"/><ellipse cx="5.4" cy="4.6" rx="2.6" ry="2.6" fill="#e9a24a"/><ellipse cx="5.4" cy="5.2" rx="1.5" ry="1.6" fill="#f6ead0"/><rect x="3.6" y="7" width="3.6" height="3.5" fill="#d8c8a0"/><rect x="4.6" y="8" width="1.4" height="2.5" fill="#b03a2a"/></g></g></svg>
<span id="t114" class="a t" style="top:236.57px;font-size:5.45px;line-height:7.63px;color:#363b45;left:464.03px;">杉夏三七</span>
<span id="t115" class="a t" style="top:237.09px;font-size:5.3px;line-height:7.42px;color:#363b45;left:636.90px;">¥ 6425.00</span>
<div class="a" style="left:403.20px;top:249.10px;width:270.80px;height:0.60px;background:#f0f2f6;"></div>
<svg class="a" style="left:415.40px;top:255.20px" width="9" height="9" viewBox="0 0 90 90"><path d="M45 12 L74 28 L74 62 L45 78 L16 62 L16 28 Z" fill="#c3cde0" stroke="#c3cde0" stroke-width="22" stroke-linejoin="round"/><circle cx="45" cy="45" r="24" fill="#fff" opacity=".4"/></svg>
<span id="t116" class="a t" style="top:257.18px;font-size:3.6px;line-height:5.04px;color:#fff;font-weight:bold;left:319.90px;width:200px;text-align:center;">2</span>
<svg class="a" style="left:440.55px;top:254.45px" width="10.5" height="10.5" viewBox="0 0 10.5 10.5"><defs><filter id="af1" x="-5%" y="-5%" width="110%" height="110%"><feGaussianBlur stdDeviation="0.4"/></filter><clipPath id="ac1"><circle cx="5.25" cy="5.25" r="5.25"/></clipPath></defs><g clip-path="url(#ac1)"><g filter="url(#af1)"><rect width="10.5" height="10.5" fill="#3a2418"/><path d="M1.5 1.2 Q5.25 3.8 9 1.2 L8 4.6 Q5.25 6.2 2.5 4.6 Z" fill="#d9d9dc"/><ellipse cx="5.25" cy="6.6" rx="3.4" ry="2.8" fill="#6a4230"/><ellipse cx="5.25" cy="4.4" rx="1.3" ry="1.1" fill="#f0f0f0"/></g></g></svg>
<span id="t117" class="a t" style="top:256.96px;font-size:5.45px;line-height:7.63px;color:#363b45;left:464.02px;">刘琼</span>
<span id="t118" class="a t" style="top:257.69px;font-size:5.3px;line-height:7.42px;color:#363b45;left:637.20px;">¥ 6348.80</span>
<div class="a" style="left:403.20px;top:269.85px;width:270.80px;height:0.60px;background:#f0f2f6;"></div>
<svg class="a" style="left:415.40px;top:275.90px" width="9" height="9" viewBox="0 0 90 90"><path d="M45 12 L74 28 L74 62 L45 78 L16 62 L16 28 Z" fill="#ec9a90" stroke="#ec9a90" stroke-width="22" stroke-linejoin="round"/><circle cx="45" cy="45" r="24" fill="#fff" opacity=".4"/></svg>
<span id="t119" class="a t" style="top:277.88px;font-size:3.6px;line-height:5.04px;color:#fff;font-weight:bold;left:319.90px;width:200px;text-align:center;">3</span>
<svg class="a" style="left:440.55px;top:275.15px" width="10.5" height="10.5" viewBox="0 0 10.5 10.5"><defs><filter id="af2" x="-5%" y="-5%" width="110%" height="110%"><feGaussianBlur stdDeviation="0.4"/></filter><clipPath id="ac2"><circle cx="5.25" cy="5.25" r="5.25"/></clipPath></defs><g clip-path="url(#ac2)"><g filter="url(#af2)"><rect width="10.5" height="10.5" fill="#050505"/><rect x="0" y="5.2" width="10.5" height="2.6" fill="#f2f2f2"/><ellipse cx="5.25" cy="4.4" rx="1.6" ry="2.6" fill="#111"/><ellipse cx="5.25" cy="2.8" rx="2.8" ry="1.3" fill="#1a1a1a"/><rect x="4.3" y="5.4" width="1.9" height="3.6" fill="#d8c8a8"/></g></g></svg>
<span id="t120" class="a t" style="top:278.40px;font-size:5.45px;line-height:7.63px;color:#363b45;left:463.61px;">谁是谁</span>
<span id="t121" class="a t" style="top:278.09px;font-size:5.3px;line-height:7.42px;color:#363b45;left:637.20px;">¥ 4454.70</span>
<div class="a" style="left:403.20px;top:290.35px;width:270.80px;height:0.60px;background:#f0f2f6;"></div>
<span id="t122" class="a t" style="top:298.03px;font-size:5.1px;line-height:7.14px;color:#333;left:319.90px;width:200px;text-align:center;">4</span>
<svg class="a" style="left:440.55px;top:295.45px" width="10.5" height="10.5" viewBox="0 0 10.5 10.5"><defs><filter id="af3" x="-5%" y="-5%" width="110%" height="110%"><feGaussianBlur stdDeviation="0.4"/></filter><clipPath id="ac3"><circle cx="5.25" cy="5.25" r="5.25"/></clipPath></defs><g clip-path="url(#ac3)"><g filter="url(#af3)"><rect width="10.5" height="10.5" fill="#e2edf5"/><path d="M0 7 L3 4.6 L5 6.2 L7.4 4.2 L10.5 7 V10.5 H0 Z" fill="#c9d9e6"/><rect x="0" y="8.4" width="10.5" height="2.1" fill="#b9cddc"/><ellipse cx="5" cy="3" rx="3.4" ry="1.6" fill="#f5f9fc"/></g></g></svg>
<span id="t123" class="a t" style="top:298.02px;font-size:5.45px;line-height:7.63px;color:#363b45;left:464.30px;">A.长龙镇喜明家电制冷维修</span>
<span id="t124" class="a t" style="top:298.62px;font-size:5.3px;line-height:7.42px;color:#363b45;left:637.01px;">¥ 4031.00</span>
<div class="a" style="left:403.20px;top:310.85px;width:270.80px;height:0.60px;background:#f0f2f6;"></div>
<span id="t125" class="a t" style="top:319.23px;font-size:5.1px;line-height:7.14px;color:#333;left:319.90px;width:200px;text-align:center;">5</span>
<svg class="a" style="left:440.55px;top:316.15px" width="10.5" height="10.5" viewBox="0 0 10.5 10.5"><defs><filter id="af4" x="-5%" y="-5%" width="110%" height="110%"><feGaussianBlur stdDeviation="0.4"/></filter><clipPath id="ac4"><circle cx="5.25" cy="5.25" r="5.25"/></clipPath></defs><g clip-path="url(#ac4)"><g filter="url(#af4)"><rect width="10.5" height="10.5" fill="#f1e855"/><ellipse cx="4.8" cy="5.6" rx="2.8" ry="2.6" fill="#f3b7a6"/><ellipse cx="4.6" cy="4" rx="2.6" ry="1.4" fill="#d95a52"/><ellipse cx="5" cy="7.4" rx="1.8" ry="1.4" fill="#fbf3ee"/><rect x="7.4" y="3" width="2" height="5" fill="#e9d83c"/></g></g></svg>
<span id="t126" class="a t" style="top:319.37px;font-size:5.45px;line-height:7.63px;color:#363b45;left:464.30px;">程昕</span>
<span id="t127" class="a t" style="top:319.09px;font-size:5.3px;line-height:7.42px;color:#363b45;left:637.20px;">¥ 3937.60</span>
</div>
<div id="form">
<div class="a" style="left:31.80px;top:345.20px;width:8.20px;height:7.40px;background:#151515;border-radius:0.6px;"></div>
<div class="a" style="left:33.20px;top:348.30px;width:5.40px;height:1.70px;background:#fff;"></div>
<div class="a" style="left:32.60px;top:351.00px;width:6.60px;height:0.90px;background:#fff;opacity:.85;"></div>
<span id="t128" class="a t" style="top:346.54px;font-size:5.2px;line-height:7.28px;color:#666;left:42.00px;">户</span>
<div class="a" style="left:32.10px;top:396.80px;width:0.80px;height:4.60px;background:#222;"></div>
<div class="a" style="left:32.00px;top:404.00px;width:1.10px;height:6.50px;background:#222;"></div>
<div class="a" style="left:32.00px;top:413.20px;width:3.60px;height:7.30px;background:#111;"></div>
<span id="t129" class="a t" style="top:414.49px;font-size:6.2px;line-height:8.68px;color:#555;left:35.80px;">票</span>
<div class="a" style="left:32.10px;top:426.00px;width:0.80px;height:4.50px;background:#222;"></div>
<div class="a" style="left:59.10px;top:408.30px;width:45.40px;height:8.50px;background:#f1f2f4;"></div>
<div class="a" style="left:45.50px;top:381.20px;width:12.00px;height:0.90px;background:#eff1fa;border-radius:1px;"></div>
<div class="a" style="left:53.60px;top:386.40px;width:13.00px;height:0.90px;background:#eff1fa;border-radius:1px;"></div>
<div class="a" style="left:53.60px;top:428.50px;width:13.00px;height:0.90px;background:#eff1fa;border-radius:1px;"></div>
<div class="a" style="left:83.60px;top:434.00px;width:11.00px;height:0.90px;background:#eff1fa;border-radius:1px;"></div>
<div class="a" style="left:71.00px;top:422.50px;width:12.00px;height:0.90px;background:#eff1fa;border-radius:1px;"></div>
<div class="a" style="left:47.00px;top:425.00px;width:8.00px;height:0.90px;background:#eff1fa;border-radius:1px;"></div>
<span id="t130" class="a t" style="top:433.57px;font-size:6.4px;line-height:8.96px;color:#c2cde0;left:28.98px;">用户</span>
<div class="a" style="left:171px;top:460.6px;width:105.4px;height:5px;border-right:1px solid #e3e6ec;border-bottom:1px solid #e3e6ec;border-bottom-right-radius:2.5px;"></div>
<div class="a" style="left:170.00px;top:463.00px;width:14.00px;height:3.00px;background:linear-gradient(90deg,#fff,rgba(255,255,255,0));"></div>
<div class="a" style="left:30.10px;top:482.20px;width:653.00px;height:8.40px;background:#f1f1f2;"></div>
<span id="t131" class="a t" style="top:500.22px;font-size:7.4px;line-height:10.36px;color:#3d4149;font-weight:bold;left:30.60px;">d</span>
<div class="a" style="left:41.40px;top:495.9px;width:102.30px;height:16.8px;border:1px solid #e1e3e8;border-radius:2.5px;background:#fff;"></div>
<span id="t132" class="a t" style="top:500.34px;font-size:7.25px;line-height:10.15px;color:#b9bdc6;left:48.85px;">用户uid</span>
<span id="t133" class="a t" style="top:500.27px;font-size:7.7px;line-height:10.78px;color:#3d4149;font-weight:500;left:155.41px;-webkit-text-stroke:0.18px #3d4149;">用户名称</span>
<div class="a" style="left:192.80px;top:495.9px;width:103.00px;height:16.8px;border:1px solid #e1e3e8;border-radius:2.5px;background:#fff;"></div>
<span id="t134" class="a t" style="top:500.34px;font-size:7.25px;line-height:10.15px;color:#b9bdc6;left:200.53px;">用户名称</span>
<span id="t135" class="a t" style="top:500.27px;font-size:7.7px;line-height:10.78px;color:#3d4149;font-weight:500;left:307.60px;-webkit-text-stroke:0.18px #3d4149;">手机号码</span>
<div class="a" style="left:344.50px;top:495.9px;width:102.90px;height:16.8px;border:1px solid #e1e3e8;border-radius:2.5px;background:#fff;"></div>
<span id="t136" class="a t" style="top:500.34px;font-size:7.25px;line-height:10.15px;color:#b9bdc6;left:351.78px;">手机号码</span>
<span id="t137" class="a t" style="top:500.34px;font-size:7.6px;line-height:10.64px;color:#4a4f58;left:458.72px;">支付时间</span>
<div class="a" style="left:496.4px;top:495.9px;width:180px;height:16.8px;border:1px solid #e1e3e8;border-radius:2.5px;background:#fff;"></div>
<svg class="a" style="left:501.8px;top:500.6px" width="7.2" height="7.2" viewBox="0 0 64 64"><circle cx="32" cy="32" r="27" fill="none" stroke="#c3c8d2" stroke-width="5"/><path d="M32 15 V33 H45" fill="none" stroke="#c3c8d2" stroke-width="5"/></svg>
<div class="a" style="left:514.8px;top:491.3px;width:166.1px;height:24.9px;border-style:solid;border-color:#fe0000;border-width:5.7px 5.4px 5.7px 5.5px;background:#fff;"></div>
<span id="t138" class="a t" style="top:500.80px;font-size:7.0px;line-height:9.8px;color:#3a3a3a;left:520.40px;">2021-12-21 00:00:00</span>
<span id="t139" class="a t" style="top:498.48px;font-size:8.6px;line-height:12.04px;color:#3a3a3a;left:498.00px;width:200px;text-align:center;">-</span>
<span id="t140" class="a t" style="top:500.80px;font-size:7.0px;line-height:9.8px;color:#3a3a3a;left:610.20px;">2021-12-31 00:00:00</span>
<div class="a" style="left:41.40px;top:523px;width:42.70px;height:17.4px;border-radius:2px;background:#2d4be3;"></div>
<span id="t141" class="a t" style="top:528.20px;font-size:6.75px;line-height:9.45px;color:#fff;font-weight:bold;left:49.11px;">搜索订单</span>
<div class="a" style="left:89.90px;top:523px;width:43.20px;height:17.4px;border-radius:2px;background:#2d4be3;"></div>
<span id="t142" class="a t" style="top:528.20px;font-size:6.75px;line-height:9.45px;color:#fff;font-weight:bold;left:97.94px;">导出订单</span>
<div class="a" style="left:138.70px;top:523px;width:43.30px;height:17.4px;border-radius:2px;background:#fff;border:1px solid #e1e3e8;"></div>
<span id="t143" class="a t" style="top:528.12px;font-size:6.75px;line-height:9.45px;color:#444;left:146.37px;">全部订单</span>
<div class="a" style="left:30.10px;top:558.20px;width:653.00px;height:0.70px;background:#e6e8ec;"></div>
<div class="a" style="left:35.1px;top:558.2px;width:648px;height:21.4px;background:#f8f8fa;border:1px solid #e9ebef;border-right:none;"></div>
<span id="t144" class="a t" style="top:566.06px;font-size:7.6px;line-height:10.64px;color:#9195a0;left:45.57px;">未支付</span>
<span id="t145" class="a t" style="top:566.06px;font-size:7.6px;line-height:10.64px;color:#9195a0;left:91.00px;">已支付</span>
<span id="t146" class="a t" style="top:566.06px;font-size:7.6px;line-height:10.64px;color:#9195a0;left:135.99px;">待核销</span>
<span id="t147" class="a t" style="top:566.06px;font-size:7.6px;line-height:10.64px;color:#9195a0;left:180.77px;">部分核销</span>
<span id="t148" class="a t" style="top:566.06px;font-size:7.6px;line-height:10.64px;color:#9195a0;left:233.59px;">已核销</span>
<span id="t149" class="a t" style="top:566.06px;font-size:7.6px;line-height:10.64px;color:#9195a0;left:278.42px;">待配送</span>
<span id="t150" class="a t" style="top:566.06px;font-size:7.6px;line-height:10.64px;color:#9195a0;left:323.37px;">配送中</span>
<span id="t151" class="a t" style="top:566.06px;font-size:7.6px;line-height:10.64px;color:#9195a0;left:368.60px;">已送达</span>
<span id="t152" class="a t" style="top:566.06px;font-size:7.6px;line-height:10.64px;color:#9195a0;left:413.80px;">确认送达</span>
<span id="t153" class="a t" style="top:566.06px;font-size:7.6px;line-height:10.64px;color:#9195a0;left:465.98px;">待发货</span>
<span id="t154" class="a t" style="top:566.06px;font-size:7.6px;line-height:10.64px;color:#9195a0;left:510.77px;">已发货</span>
<span id="t155" class="a t" style="top:566.06px;font-size:7.6px;line-height:10.64px;color:#9195a0;left:555.92px;">确认收货</span>
<span id="t156" class="a t" style="top:566.06px;font-size:7.6px;line-height:10.64px;color:#9195a0;left:608.20px;">已退款</span>
<span id="t157" class="a t" style="top:589.04px;font-size:7.7px;line-height:10.78px;color:#474b53;font-weight:500;left:35.58px;-webkit-text-stroke:0.08px #474b53;">商品</span>
<span id="t158" class="a t" style="top:589.04px;font-size:7.7px;line-height:10.78px;color:#474b53;font-weight:500;left:306.25px;-webkit-text-stroke:0.08px #474b53;">金额</span>
<span id="t159" class="a t" style="top:589.04px;font-size:7.7px;line-height:10.78px;color:#474b53;font-weight:500;left:350.30px;-webkit-text-stroke:0.08px #474b53;">数量</span>
<span id="t160" class="a t" style="top:589.04px;font-size:7.7px;line-height:10.78px;color:#474b53;font-weight:500;left:393.02px;-webkit-text-stroke:0.08px #474b53;">用户信息</span>
<span id="t161" class="a t" style="top:589.04px;font-size:7.7px;line-height:10.78px;color:#474b53;font-weight:500;left:511.67px;-webkit-text-stroke:0.08px #474b53;">到货方式</span>
<span id="t162" class="a t" style="top:589.04px;font-size:7.7px;line-height:10.78px;color:#474b53;font-weight:500;left:577.90px;-webkit-text-stroke:0.08px #474b53;">状态</span>
</div>
</body></html>
